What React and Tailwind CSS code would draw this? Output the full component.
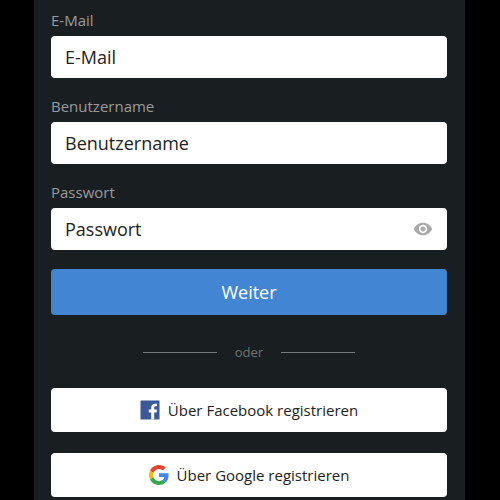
import { useState } from "react";

const fields = [
  { id: "email", label: "E-Mail", type: "email" },
  { id: "username", label: "Benutzername", type: "text" },
  { id: "password", label: "Passwort", type: "password" },
];

function EyeIcon() {
  return (
    <svg viewBox="0 0 24 24" className="h-5 w-5" fill="currentColor" aria-hidden="true">
      <path d="M12 4.5C7 4.5 2.73 7.61 1 12c1.73 4.39 6 7.5 11 7.5s9.27-3.11 11-7.5c-1.73-4.39-6-7.5-11-7.5zM12 17c-2.76 0-5-2.24-5-5s2.24-5 5-5 5 2.24 5 5-2.24 5-5 5zm0-8c-1.66 0-3 1.34-3 3s1.34 3 3 3 3-1.34 3-3-1.34-3-3-3z" />
    </svg>
  );
}

function FacebookIcon() {
  return (
    <svg viewBox="0 0 20 20" className="h-5 w-5" aria-hidden="true">
      <rect x="0.5" y="0.5" width="19" height="19" rx="0.5" fill="#3b5998" />
      <path
        d="M11.2 19.5v-7.1H8.8V9.6h2.4V7.5c0-2.5 1.5-3.8 3.7-3.8 1 0 1.9.1 2.2.1v2.5h-1.5c-1.2 0-1.4.6-1.4 1.4v1.9H17l-.4 2.8h-2.4v7.1z"
        fill="#fff"
      />
    </svg>
  );
}

function GoogleIcon() {
  return (
    <svg viewBox="0 0 48 48" className="h-5 w-5" aria-hidden="true">
      <path
        fill="#EA4335"
        d="M24 9.5c3.54 0 6.71 1.22 9.21 3.6l6.85-6.85C35.9 2.38 30.47 0 24 0 14.62 0 6.51 5.38 2.56 13.22l7.98 6.19C12.43 13.72 17.74 9.5 24 9.5z"
      />
      <path
        fill="#4285F4"
        d="M46.98 24.55c0-1.57-.15-3.09-.38-4.55H24v9.02h12.94c-.58 2.96-2.26 5.48-4.78 7.18l7.73 6c4.51-4.18 7.09-10.36 7.09-17.65z"
      />
      <path
        fill="#FBBC05"
        d="M10.53 28.59c-.48-1.45-.76-2.99-.76-4.59s.27-3.14.76-4.59l-7.98-6.19C.92 16.46 0 20.12 0 24c0 3.88.92 7.54 2.56 10.78l7.97-6.19z"
      />
      <path
        fill="#34A853"
        d="M24 48c6.48 0 11.93-2.13 15.89-5.81l-7.73-6c-2.15 1.45-4.92 2.3-8.16 2.3-6.26 0-11.57-4.22-13.47-9.91l-7.98 6.19C6.51 42.62 14.62 48 24 48z"
      />
    </svg>
  );
}

export default function App() {
  const [values, setValues] = useState({ email: "", username: "", password: "" });
  const [showPassword, setShowPassword] = useState(false);

  const handleChange = (e) => {
    setValues({ ...values, [e.target.name]: e.target.value });
  };

  return (
    <div className="min-h-screen bg-black pl-[34px] pr-[35px] font-['Open_Sans',sans-serif]">
      <main className="min-h-screen bg-[#191e20] pt-2 pb-[3px] pl-[17px] pr-[18px]">
        <form onSubmit={(e) => e.preventDefault()}>
          <div className="flex flex-col gap-4">
            {fields.map((field) => (
              <div key={field.id}>
                <label
                  htmlFor={field.id}
                  className="mb-1 block text-[15px] leading-6 text-[#999c9e]"
                >
                  {field.label}
                </label>
                <div className="flex h-[42px] items-center rounded bg-white px-3.5">
                  <input
                    id={field.id}
                    name={field.id}
                    type={field.type === "password" && showPassword ? "text" : field.type}
                    placeholder={field.label}
                    value={values[field.id]}
                    onChange={handleChange}
                    className="min-w-0 flex-1 bg-transparent text-lg text-[#222] outline-none placeholder:text-[#222]"
                  />
                  {field.type === "password" && (
                    <button
                      type="button"
                      aria-label="Passwort anzeigen"
                      onClick={() => setShowPassword(!showPassword)}
                      className="text-[#aaa]"
                    >
                      <EyeIcon />
                    </button>
                  )}
                </div>
              </div>
            ))}
          </div>

          <button
            type="submit"
            className="mt-[19px] h-[46px] w-full rounded bg-[#4286d3] text-lg text-white"
          >
            Weiter
          </button>
        </form>

        {/* Trenner */}
        <div className="mt-[27px] mb-[26px] flex items-center justify-center gap-[18px] text-[13px] leading-5 text-[#707476]">
          <span className="h-px w-[74px] bg-[#777b7d]"></span>
          oder
          <span className="h-px w-[74px] bg-[#777b7d]"></span>
        </div>

        <div className="flex flex-col gap-[21px]">
          <button
            type="button"
            className="flex h-11 w-full items-center justify-center gap-2 rounded bg-white text-[15px] text-[#222]"
          >
            <FacebookIcon />
            Über Facebook registrieren
          </button>
          <button
            type="button"
            className="flex h-11 w-full items-center justify-center gap-2 rounded bg-white text-[15px] text-[#222]"
          >
            <GoogleIcon />
            Über Google registrieren
          </button>
        </div>
      </main>
    </div>
  );
}
